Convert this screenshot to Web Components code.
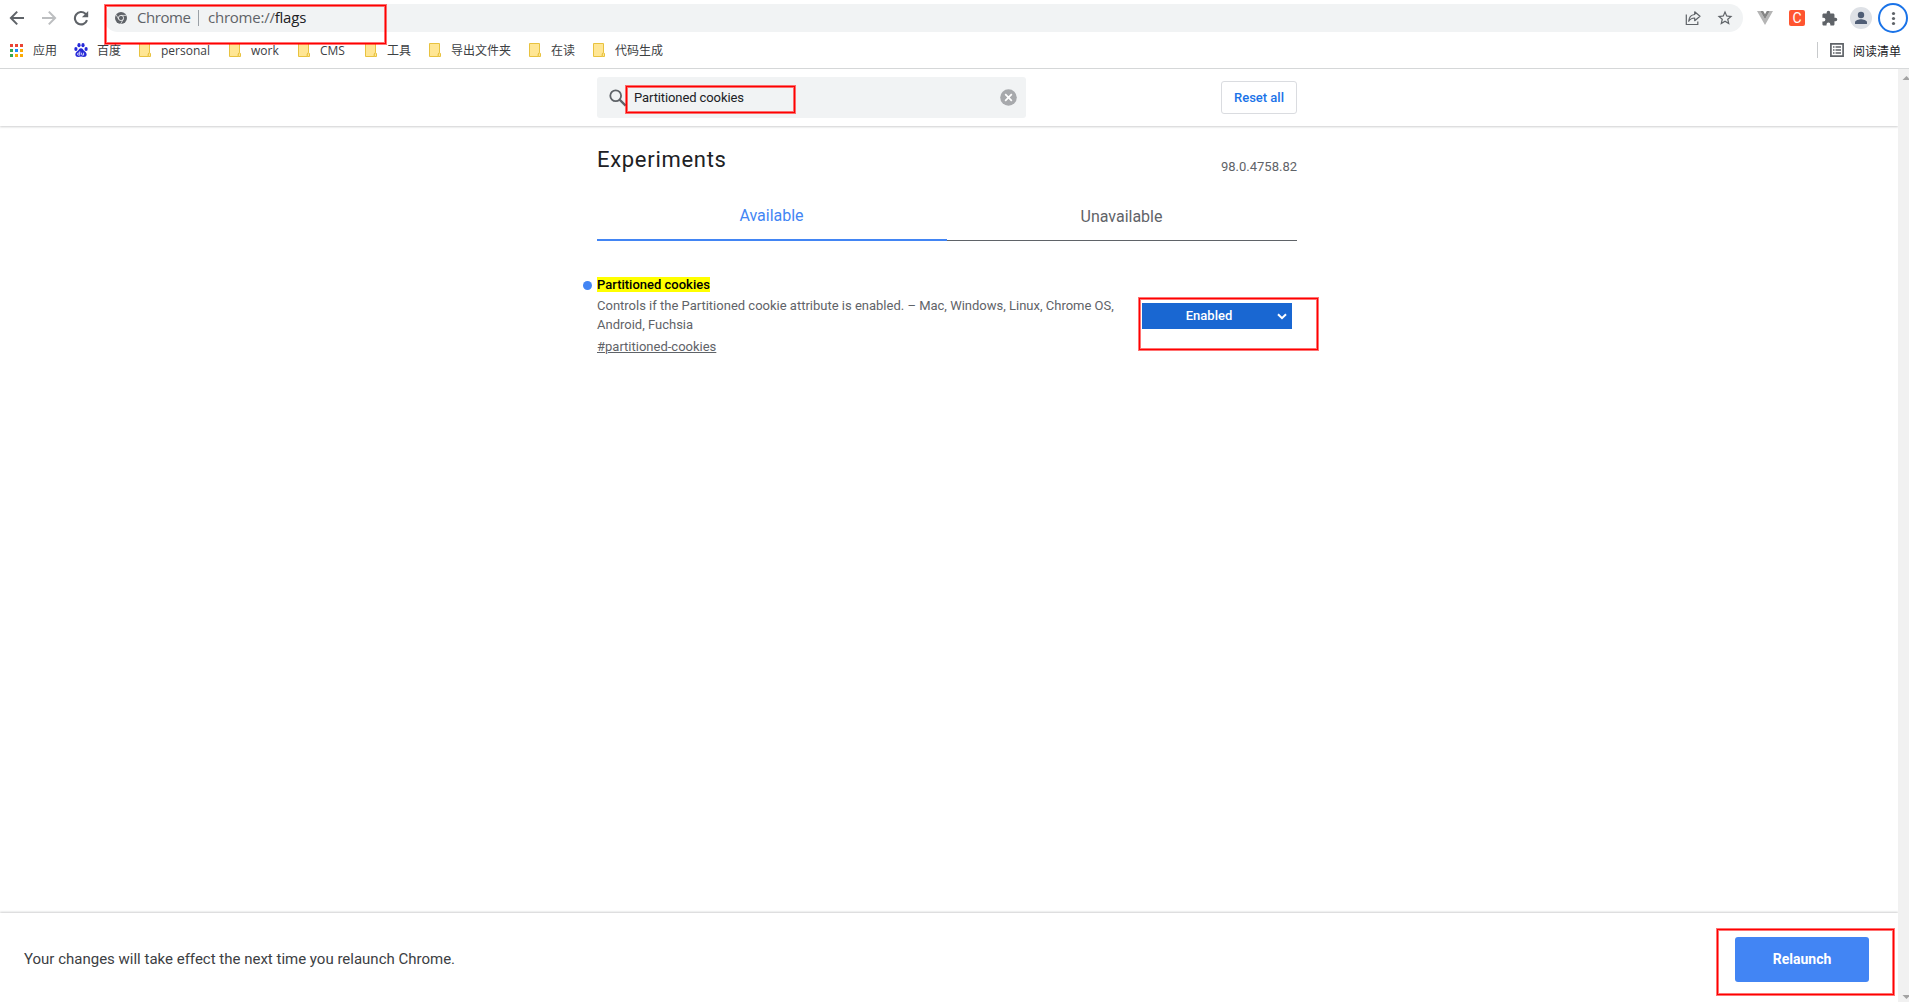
<!DOCTYPE html>
<html lang="zh-CN">
<head>
<meta charset="utf-8">
<title>Experiments</title>
<style>
  html, body {
    margin: 0;
    height: 100%;
    overflow: hidden;
    background: #fff;
  }
  body {
    font-family: Roboto, "Noto Sans CJK SC", sans-serif;
    font-size: 13px;
    color: #202124;
  }
</style>
</head>
<body>
<browser-window>
  <browser-toolbar slot="toolbar"></browser-toolbar>
  <bookmark-bar slot="bookmarks">
    <bookmark-item icon="apps" style="--text-width: 23px">应用</bookmark-item>
    <bookmark-item icon="paw" style="--text-width: 24px; gap: 9px">百度</bookmark-item>
    <bookmark-item style="--text-width: 50px">personal</bookmark-item>
    <bookmark-item style="--text-width: 29px">work</bookmark-item>
    <bookmark-item style="--text-width: 27px">CMS</bookmark-item>
    <bookmark-item style="--text-width: 24px">工具</bookmark-item>
    <bookmark-item style="--text-width: 60px">导出文件夹</bookmark-item>
    <bookmark-item style="--text-width: 24px">在读</bookmark-item>
    <bookmark-item style="--text-width: 48px">代码生成</bookmark-item>
    <span slot="end">阅读清单</span>
  </bookmark-bar>
  <flags-page>
    <flags-search slot="header">Partitioned cookies</flags-search>
    <flag-experiment name="Partitioned cookies" anchor="#partitioned-cookies" value="Enabled">
      Controls if the Partitioned cookie attribute is enabled. – Mac, Windows, Linux, Chrome OS, Android, Fuchsia
    </flag-experiment>
    <relaunch-bar slot="footer">Your changes will take effect the next time you relaunch Chrome.</relaunch-bar>
  </flags-page>
</browser-window>
<mark-box style="left: 104px; top: 4px; width: 283px; height: 41px"></mark-box>
<mark-box style="left: 625px; top: 85px; width: 171px; height: 29px"></mark-box>
<mark-box style="left: 1138px; top: 297px; width: 181px; height: 54px"></mark-box>
<mark-box style="left: 1716px; top: 928px; width: 179px; height: 68px"></mark-box>

<script>
{
  const html = String.raw;

  const icons = {
    back: html`<svg width="16" height="16" viewBox="0 0 16 16" fill="none" stroke="#5f6368" stroke-width="2"><path d="M15 8H2.5M8.2 1.6 1.9 8l6.3 6.4"/></svg>`,
    forward: html`<svg width="16" height="16" viewBox="0 0 16 16" fill="none" stroke="#bcbec0" stroke-width="2"><path d="M1 8h12.5M7.8 1.6 14.1 8l-6.3 6.4"/></svg>`,
    reload: html`<svg width="16" height="16" viewBox="0 0 16 16"><path fill="none" stroke="#5f6368" stroke-width="2.1" d="M14 10.2A6.2 6.2 0 1 1 12.4 3.7L13.2 4.5"/><path fill="#5f6368" d="M15.2 1v6.3H8.9z"/></svg>`,
    chrome: html`<svg width="12" height="12" viewBox="0 0 24 24"><circle cx="12" cy="12" r="12" fill="#5f6368"/><circle cx="12" cy="12" r="5.2" fill="none" stroke="#f1f3f4" stroke-width="1.7"/><path stroke="#f1f3f4" stroke-width="1.5" d="M12 6.8h10.6M7.5 14.6 2.2 5.4M16.5 14.6 11.2 24"/></svg>`,
    share: html`<svg width="16" height="16" viewBox="0 0 16 16" fill="none" stroke="#5f6368" stroke-width="1.2"><path d="M1.3 4.5v10h11.5v-3"/><path stroke-linejoin="round" d="M9.7 1.8 15 6.3l-5.3 4.4V8C7 8 5 9 3.7 11.3 4 7.5 6.2 4.8 9.7 4.5z"/></svg>`,
    star: html`<svg width="18" height="18" viewBox="0 0 24 24"><path fill="#5f6368" d="m22 9.240-7.190-.620L12 2 9.190 8.630 2 9.240l5.460 4.730L5.820 21 12 17.270 18.180 21l-1.630-7.030zM12 15.400l-3.760 2.270 1-4.280-3.320-2.880 4.380-.380L12 6.100l1.710 4.040 4.380.380-3.320 2.880 1 4.280z"/></svg>`,
    vue: html`<svg width="16" height="14" viewBox="0 0 16 14"><path fill="#b5b5b5" d="M0 0h3.200L8 8.300 12.800 0H16L8 14z"/><path fill="#858585" d="M3.200 0h3L8 3.200 9.800 0h3L8 8.300z"/></svg>`,
    puzzle: html`<svg width="17" height="17" viewBox="0 0 24 24"><path fill="#5f6368" d="M20.500 11H19V7c0-1.100-.900-2-2-2h-4V3.500a2.500 2.500 0 0 0-5 0V5H4c-1.100 0-2 .900-2 2v3.800h1.500a2.700 2.700 0 0 1 0 5.400H2V20c0 1.100.900 2 2 2h3.800v-1.500a2.700 2.700 0 0 1 5.400 0V22H17c1.100 0 2-.900 2-2v-4h1.500a2.500 2.500 0 0 0 0-5z"/></svg>`,
    person: html`<svg width="22" height="22" viewBox="0 0 22 22"><circle cx="11" cy="11" r="11" fill="#dee1e6"/><circle cx="11" cy="8" r="3.200" fill="#4f5d75"/><path fill="#4f5d75" d="M5 17v-1.800c0-2 4-3 6-3s6 1 6 3V17z"/></svg>`,
    menu: html`<svg width="30" height="30" viewBox="0 0 30 30"><circle cx="15" cy="15" r="14" fill="#fff" stroke="#1a73e8" stroke-width="2"/><g fill="#5f6368"><circle cx="15.500" cy="10.500" r="1.600"/><circle cx="15.500" cy="15.500" r="1.600"/><circle cx="15.500" cy="20.500" r="1.600"/></g></svg>`,
    apps: html`<svg width="13" height="13" viewBox="0 0 13 13"><path fill="#ea4335" d="M0 0h3v3H0zM5 0h3v3H5zM10 0h3v3h-3z"/><path fill="#34a853" d="M0 5h3v3H0zM0 10h3v3H0z"/><path fill="#1a8cff" d="M5 5h3v3H5z"/><path fill="#fbab04" d="M10 5h3v3h-3zM5 10h3v3H5zM10 10h3v3h-3z"/></svg>`,
    paw: html`<svg width="14" height="14" viewBox="0 0 14 14"><g fill="#2529d8"><ellipse cx="1.900" cy="6" rx="1.600" ry="2"/><ellipse cx="5" cy="2.200" rx="1.600" ry="2.100"/><ellipse cx="9" cy="2.200" rx="1.600" ry="2.100"/><ellipse cx="12.100" cy="6" rx="1.600" ry="2"/><path d="M7 5.300c1.700 0 2.300 1.700 3.400 2.800 1.400 1.300 2.500 2.200 2.200 4-.3 1.900-2.200 2.100-5.600 1.500-3.400.6-5.300.4-5.600-1.500-.3-1.800.8-2.700 2.200-4C4.700 7 5.300 5.300 7 5.300z"/></g><path fill="none" stroke="#fff" stroke-width=".8" d="M5.800 8.400v3.700H4.500a1 1 0 0 1 0-2h1.300M7.600 9.700v1.700c0 .5.300.7.700.7h1.300V9.700"/></svg>`,
    folder: html`<svg width="12" height="14" viewBox="0 0 12 14"><path fill="#ffe694" stroke="#e8c23f" d="M.5.500h10v9.200c-1 .5-1.200 1.400-1.200 2.300v1.500H.5z"/><path fill="#ffe694" stroke="#e8c23f" d="M9.300 13.500V11c0-1.600 2.200-1.600 2.200 0v2.500z"/></svg>`,
    list: html`<svg width="14" height="14" viewBox="0 0 14 14"><path fill="none" stroke="#5f6368" stroke-width="1.700" d="M.9.900h12.200v12.200H.9z"/><path stroke="#5f6368" stroke-width="1.400" d="M3 4h1.500M5.500 4H11M3 7h1.500M5.500 7H11M3 10h1.500M5.500 10H11"/></svg>`,
    search: html`<svg width="18" height="18" viewBox="0 0 18 18" fill="none" stroke="#5f6368"><circle cx="6.700" cy="6.700" r="5.400" stroke-width="1.800"/><path stroke-width="2.200" d="m10.600 10.600 6 6"/></svg>`,
    clear: html`<svg width="17" height="17" viewBox="0 0 17 17"><circle cx="8.500" cy="8.500" r="8.300" fill="#a7a9ac"/><path stroke="#fff" stroke-width="1.700" d="m5.200 5.200 6.600 6.600M11.800 5.200l-6.600 6.600"/></svg>`,
    chevron: html`<svg width="10" height="7" viewBox="0 0 10 7"><path fill="none" stroke="#fff" stroke-width="2" d="m1 1.200 4 4 4-4"/></svg>`,
  };

  // Registers an element whose shadow root is cloned from the given markup
  function define(name, markup, setup) {
    const template = document.createElement("template");
    template.innerHTML = markup;
    customElements.define(
      name,
      class extends HTMLElement {
        constructor() {
          super();
          this.attachShadow({ mode: "open" });
          this.shadowRoot.append(template.content.cloneNode(true));
        }

        connectedCallback() {
          setup?.(this, this.shadowRoot);
        }
      }
    );
  }

  define("ui-icon", html`
    <style>
      :host {
        display: flex;
        align-items: center;
        justify-content: center;
        flex: none;
      }
      svg { display: block; }
      div { display: contents; }
    </style>
    <div></div>
  `, (host, root) => {
    root.querySelector("div").innerHTML = icons[host.getAttribute("name")];
  });

  // Red outline with a soft pixel on both sides of the line
  define("mark-box", html`
    <style>
      :host {
        display: block;
        position: absolute;
        box-sizing: border-box;
        border: 1px solid rgba(255, 0, 0, 0.55);
        box-shadow: inset 0 0 0 1px #f00, inset 0 0 0 2px rgba(255, 0, 0, 0.55);
        pointer-events: none;
      }
    </style>
  `);

  define("browser-window", html`
    <style>
      :host {
        display: flex;
        flex-direction: column;
        height: 100vh;
      }
      header {
        flex: none;
        box-sizing: border-box;
        height: 69px;
        border-bottom: 1px solid #d8dadb;
      }
      main {
        flex: 1;
        min-height: 0;
        display: flex;
      }
      .track {
        flex: none;
        width: 11px;
        overflow: hidden;
        background: #f1f1f1;
        display: flex;
        flex-direction: column;
        justify-content: space-between;
      }
      .track svg {
        display: block;
        width: 17px;
        height: 17px;
      }
    </style>
    <header>
      <slot name="toolbar"></slot>
      <slot name="bookmarks"></slot>
    </header>
    <main>
      <slot></slot>
      <div class="track">
        <svg viewBox="0 0 17 17"><path fill="#a3a3a3" d="m8.500 7 4 4h-8z"/></svg>
        <svg viewBox="0 0 17 17"><path fill="#a3a3a3" d="m8.500 14-4-4h8z"/></svg>
      </div>
    </main>
  `);

  define("browser-toolbar", html`
    <style>
      :host {
        display: flex;
        align-items: center;
        box-sizing: border-box;
        height: 36px;
        padding-left: 9px;
        font: 15px "Open Sans", sans-serif;
        color: #5f6368;
      }
      .nav {
        display: flex;
        gap: 16px;
        width: 95px;
      }
      .omnibox {
        flex: none;
        display: flex;
        align-items: center;
        box-sizing: border-box;
        width: 1639px;
        height: 28px;
        border-radius: 14px;
        padding: 0 9px 0 11px;
        background: #f1f3f4;
        white-space: nowrap;
      }
      .name { margin-left: 10px; width: 53px; letter-spacing: -0.45px; }
      .rule {
        width: 1px;
        height: 16px;
        margin: 0 9px 0 8px;
        background: #9aa0a6;
      }
      .url { flex: 1; letter-spacing: -0.23px; }
      .name, .url { padding-bottom: 2px; }
      b { font-weight: normal; color: #202124; }
      .omnibox ui-icon + ui-icon { margin-left: 15px; }
      .actions { display: flex; align-items: center; }
      .tile {
        width: 16px;
        height: 16px;
        margin: 0 16px 0 16px;
        border-radius: 2px;
        background: #ff5530;
        color: #fff;
        font: 14px/16px Roboto, sans-serif;
        text-align: center;
      }
    </style>
    <div class="nav">
      <ui-icon name="back"></ui-icon>
      <ui-icon name="forward"></ui-icon>
      <ui-icon name="reload"></ui-icon>
    </div>
    <div class="omnibox">
      <ui-icon name="chrome"></ui-icon>
      <span class="name">Chrome</span>
      <span class="rule"></span>
      <span class="url">chrome://<b>flags</b></span>
      <ui-icon name="share"></ui-icon>
      <ui-icon name="star"></ui-icon>
    </div>
    <div class="actions">
      <ui-icon name="vue" style="margin-left: 14px"></ui-icon>
      <span class="tile">C</span>
      <ui-icon name="puzzle"></ui-icon>
      <ui-icon name="person" style="margin-left: 12px"></ui-icon>
      <ui-icon name="menu" style="margin-left: 6px"></ui-icon>
    </div>
  `);

  define("bookmark-bar", html`
    <style>
      :host {
        display: flex;
        align-items: center;
        gap: 18px;
        height: 28px;
        padding: 0 8px 0 10px;
        font: 12px "Open Sans", "Noto Sans CJK SC", sans-serif;
        color: #3c4043;
      }
      .end {
        margin-left: auto;
        display: flex;
        align-items: center;
        gap: 9px;
        color: #202124;
      }
      .end::before {
        content: "";
        width: 1px;
        height: 16px;
        margin-right: 3px;
        background: #c8cacc;
      }
      ::slotted(span) { padding-top: 1px; }
    </style>
    <slot></slot>
    <div class="end">
      <ui-icon name="list"></ui-icon>
      <slot name="end"></slot>
    </div>
  `);

  define("bookmark-item", html`
    <style>
      :host {
        display: flex;
        align-items: center;
        gap: 10px;
        white-space: nowrap;
      }
      span {
        width: var(--text-width);
        padding-top: 2px;
        line-height: 18px;
      }
    </style>
    <ui-icon></ui-icon>
    <span><slot></slot></span>
  `, (host, root) => {
    const icon = document.createElement("ui-icon");
    icon.setAttribute("name", host.getAttribute("icon") || "folder");
    root.querySelector("ui-icon").replaceWith(icon);
  });

  define("flags-page", html`
    <style>
      :host {
        flex: 1;
        min-width: 0;
        display: flex;
        flex-direction: column;
      }
      .content {
        flex: 1;
        width: 700px;
        margin: 0 auto;
        padding: 19px 4px 0 0;
      }
      .title {
        display: flex;
        justify-content: space-between;
        color: #5f6368;
      }
      h1 {
        margin: 0;
        font-size: 22px;
        line-height: 30px;
        font-weight: 400;
        letter-spacing: 0.7px;
        color: #202124;
      }
      .version { line-height: 16px; margin-top: 14px; }
      .tabs {
        display: flex;
        margin-top: 20px;
        font-size: 16px;
        text-align: center;
        color: #5f6368;
      }
      .tabs div {
        flex: 1 0 0;
        box-sizing: border-box;
        width: 350px;
        height: 46px;
        border-bottom: 1px solid #5f6368;
        padding: 12px 1px 0 0;
        line-height: 19px;
      }
      .tabs .selected {
        border-bottom: 2px solid #4285f4;
        padding-top: 11px;
        color: #4285f4;
      }
      .list { margin-top: 36px; }
    </style>
    <slot name="header"></slot>
    <section class="content">
      <div class="title">
        <h1>Experiments</h1>
        <span class="version">98.0.4758.82</span>
      </div>
      <div class="tabs">
        <div class="selected">Available</div>
        <div>Unavailable</div>
      </div>
      <div class="list"><slot></slot></div>
    </section>
    <slot name="footer"></slot>
  `);

  define("flags-search", html`
    <style>
      :host {
        flex: none;
        display: flex;
        justify-content: center;
        height: 57px;
        box-shadow: 0 1px 2px rgba(60, 64, 67, 0.25);
      }
      .row {
        display: flex;
        align-items: center;
        justify-content: space-between;
        width: 700px;
        margin-right: 4px;
      }
      .field {
        display: flex;
        align-items: center;
        box-sizing: border-box;
        width: 429px;
        height: 41px;
        padding: 0 9px 0 12px;
        border-radius: 3px;
        background: #f1f3f4;
      }
      .query { flex: 1; margin: 0 0 1px 7px; letter-spacing: -0.1px; }
      button {
        box-sizing: border-box;
        width: 76px;
        height: 33px;
        padding: 0;
        border: 1px solid #dadce0;
        border-radius: 3px;
        background: #fff;
        color: #1a73e8;
        font: 500 13px Roboto, sans-serif;
      }
    </style>
    <div class="row">
      <div class="field">
        <ui-icon name="search"></ui-icon>
        <span class="query"><slot></slot></span>
        <ui-icon name="clear"></ui-icon>
      </div>
      <button>Reset all</button>
    </div>
  `);

  define("flag-experiment", html`
    <style>
      :host {
        display: flex;
        line-height: 19px;
        color: #5f6368;
      }
      .body { width: 525px; }
      h2 {
        display: flex;
        align-items: center;
        margin: 0 0 4px -14px;
        font-size: 13px;
        font-weight: 500;
        color: #000;
      }
      h2::before {
        content: "";
        width: 9px;
        height: 9px;
        margin: 2px 5px 0 0;
        border-radius: 50%;
        background: #4285f4;
      }
      mark { background: #ff0; color: inherit; line-height: 15px; }
      p { margin: 0; }
      a {
        display: inline-block;
        margin-top: 3px;
        text-decoration: underline;
      }
      .select {
        display: flex;
        align-items: center;
        box-sizing: border-box;
        width: 150px;
        height: 26px;
        margin: 26px 0 0 20px;
        padding-right: 5px;
        background: #1967d2;
        color: #fff;
        font-weight: 500;
      }
      .select span { flex: 1; padding: 0 1px 2px 0; text-align: center; }
    </style>
    <div class="body">
      <h2><mark></mark></h2>
      <p><slot></slot></p>
      <a></a>
    </div>
    <div class="select">
      <span></span>
      <ui-icon name="chevron"></ui-icon>
    </div>
  `, (host, root) => {
    root.querySelector("mark").textContent = host.getAttribute("name");
    root.querySelector("a").textContent = host.getAttribute("anchor");
    root.querySelector(".select span").textContent = host.getAttribute("value");
  });

  define("relaunch-bar", html`
    <style>
      :host {
        flex: none;
        display: flex;
        align-items: center;
        justify-content: space-between;
        box-sizing: border-box;
        height: 89px;
        padding: 4px 29px 0 24px;
        box-shadow: 0 -1px 2px rgba(60, 64, 67, 0.25);
        font-size: 15px;
        color: #3c4043;
      }
      span { margin-bottom: 2px; }
      button {
        width: 134px;
        height: 45px;
        padding: 0 0 1px;
        border: 0;
        border-radius: 3px;
        background: #4285f4;
        color: #fff;
        font: bold 14px Roboto, sans-serif;
      }
    </style>
    <span><slot></slot></span>
    <button>Relaunch</button>
  `);
}
</script>
</body>
</html>
